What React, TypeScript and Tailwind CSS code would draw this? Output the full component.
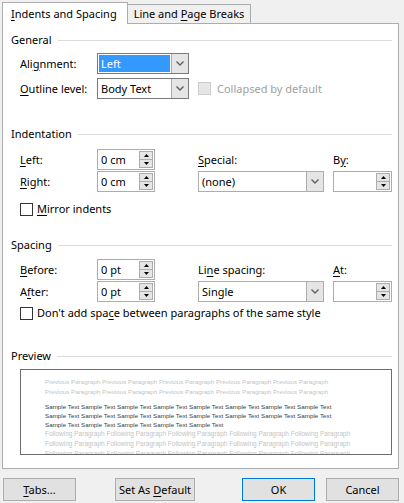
import type { ReactNode } from "react";

const Key = ({ children }: { children: ReactNode }) => (
  <span className="underline decoration-1 underline-offset-[2px]">{children}</span>
);

const Chevron = () => (
  <svg width="8" height="5" viewBox="0 0 8 5">
    <polyline points="0.5,0.5 4,4 7.5,0.5" fill="none" stroke="#606060" strokeWidth="1.4" />
  </svg>
);

const SectionHeader = ({ title }: { title: string }) => (
  <div className="flex h-[16px] items-center gap-[6px]">
    <span>{title}</span>
    <div className="h-px flex-1 bg-[#dcdcdc]" />
  </div>
);

const SelectBox = ({
  value,
  width,
  selected = false,
  light = false,
}: {
  value: string;
  width: string;
  selected?: boolean;
  light?: boolean;
}) => (
  <div
    className={`flex h-[21px] border bg-white ${width} ${
      light ? "border-[#adadad]" : "border-[#7a7a7a]"
    }`}
  >
    <div className="flex flex-1 p-[1px]">
      <div
        className={`flex flex-1 items-center pl-[2px] ${
          selected ? "bg-[#3399ff] text-white" : ""
        }`}
      >
        {value}
      </div>
    </div>
    <div className="flex w-[17px] items-center justify-center border-l border-[#adadad] bg-[#e5e5e5]">
      <Chevron />
    </div>
  </div>
);

const SpinBox = ({ value, width }: { value?: string; width: string }) => (
  <div className={`flex h-[21px] border border-[#adadad] bg-white ${width}`}>
    <div className="flex flex-1 items-center pl-[3px]">{value}</div>
    <div className="my-[1px] mr-[1px] flex w-[14px] flex-col border border-[#adadad] bg-[#e5e5e5]">
      <div className="flex flex-1 items-center justify-center border-b border-[#adadad]">
        <svg width="5" height="3" viewBox="0 0 5 3">
          <polygon points="2.5,0 5,3 0,3" fill="#000" />
        </svg>
      </div>
      <div className="flex flex-1 items-center justify-center">
        <svg width="5" height="3" viewBox="0 0 5 3">
          <polygon points="0,0 5,0 2.5,3" fill="#000" />
        </svg>
      </div>
    </div>
  </div>
);

const CheckBox = ({ disabled = false }: { disabled?: boolean }) => (
  <div
    className={`h-[13px] w-[13px] border ${
      disabled ? "border-[#cccccc] bg-[#e6e6e6]" : "border-[#333333] bg-white"
    }`}
  />
);

const Button = ({
  children,
  width,
  primary = false,
  className = "",
}: {
  children: ReactNode;
  width: string;
  primary?: boolean;
  className?: string;
}) => (
  <div
    className={`flex h-[23px] items-center justify-center whitespace-nowrap border bg-[#e1e1e1] ${width} ${
      primary ? "border-[#0078d7]" : "border-[#adadad]"
    } ${className}`}
  >
    {children}
  </div>
);

const prevLine = Array(5).fill("Previous Paragraph").join(" ");
const followLine = Array(5).fill("Following Paragraph").join(" ");
const sampleLine = Array(8).fill("Sample Text").join(" ");
const sampleShort = Array(5).fill("Sample Text").join(" ");

const Preview = () => (
  <div className="ml-[9px] h-[86px] w-[372px] overflow-hidden border border-[#6d6d6d] bg-white pl-[24px] pt-[7px] font-['Liberation_Sans',sans-serif] text-[6.25px] whitespace-nowrap">
    <div className="leading-[10px] text-[#c4c4c4]">
      <div>{prevLine}</div>
      <div>{prevLine}</div>
    </div>
    <div className="mt-[5px] leading-[9px] text-[#3c3c3c]">
      <div>{sampleLine}</div>
      <div>{sampleLine}</div>
      <div>{sampleShort}</div>
    </div>
    <div className="text-[6.5px] leading-[10px] text-[#c4c4c4]">
      <div>{followLine}</div>
      <div>{followLine}</div>
      <div>{followLine}</div>
    </div>
  </div>
);

export default function App() {
  return (
    <div className="h-[503px] w-[404px] overflow-hidden bg-[#f0f0f0] font-['Noto_Sans',sans-serif] text-[11px] leading-[16px] text-black">
      <div className="flex h-[23px] items-end pl-[2px]">
        <div className="relative z-10 -mb-px flex h-[22px] w-[126px] items-center whitespace-nowrap border border-b-0 border-[#adadad] bg-white pl-[8px]">
          <span>
            <Key>I</Key>ndents and Spacing
          </span>
        </div>
        <div className="flex h-[19px] w-[123px] items-center justify-center whitespace-nowrap border border-b-0 border-l-0 border-[#adadad] bg-[#f0f0f0]">
          <span>
            Line and <Key>P</Key>age Breaks
          </span>
        </div>
      </div>

      <div className="ml-[2px] h-[446px] w-[397px] border border-[#adadad] bg-white pl-[8px] pr-[6px]">
        <div className="mt-[8px]">
          <SectionHeader title="General" />
        </div>
        <div className="mt-[5px] flex h-[21px] items-center pl-[9px]">
          <div className="w-[77px]">
            Ali<Key>g</Key>nment:
          </div>
          <SelectBox value="Left" width="w-[92px]" selected />
        </div>
        <div className="mt-[4px] flex h-[21px] items-center pl-[9px]">
          <div className="w-[77px]">
            <Key>O</Key>utline level:
          </div>
          <SelectBox value="Body Text" width="w-[92px]" />
          <div className="ml-[9px]">
            <CheckBox disabled />
          </div>
          <div className="ml-[6px] text-[#a0a0a0]">Collapsed by default</div>
        </div>

        <div className="mt-[27px]">
          <SectionHeader title="Indentation" />
        </div>
        <div className="mt-[7px] flex h-[21px] items-center pl-[9px]">
          <div className="w-[77px]">
            <Key>L</Key>eft:
          </div>
          <SpinBox value="0 cm" width="w-[58px]" />
          <div className="ml-[43px] w-[135px]">
            <Key>S</Key>pecial:
          </div>
          <div>
            B<Key>y</Key>:
          </div>
        </div>
        <div className="mt-[1px] flex h-[21px] items-center pl-[9px]">
          <div className="w-[77px]">
            <Key>R</Key>ight:
          </div>
          <SpinBox value="0 cm" width="w-[58px]" />
          <div className="ml-[43px]">
            <SelectBox value="(none)" width="w-[126px]" light />
          </div>
          <div className="ml-[9px]">
            <SpinBox width="w-[59px]" />
          </div>
        </div>
        <div className="mt-[9px] flex h-[16px] items-center gap-[4px] pl-[9px]">
          <CheckBox />
          <span>
            <Key>M</Key>irror indents
          </span>
        </div>

        <div className="mt-[20px]">
          <SectionHeader title="Spacing" />
        </div>
        <div className="mt-[6px] flex h-[21px] items-center pl-[9px]">
          <div className="w-[77px]">
            <Key>B</Key>efore:
          </div>
          <SpinBox value="0 pt" width="w-[58px]" />
          <div className="ml-[43px] w-[135px]">
            Li<Key>n</Key>e spacing:
          </div>
          <div>
            <Key>A</Key>t:
          </div>
        </div>
        <div className="mt-[1px] flex h-[21px] items-center pl-[9px]">
          <div className="w-[77px]">
            A<Key>f</Key>ter:
          </div>
          <SpinBox value="0 pt" width="w-[58px]" />
          <div className="ml-[43px]">
            <SelectBox value="Single" width="w-[126px]" light />
          </div>
          <div className="ml-[9px]">
            <SpinBox width="w-[59px]" />
          </div>
        </div>
        <div className="mt-[3px] flex h-[16px] items-center gap-[4px] pl-[9px]">
          <CheckBox />
          <span>
            Don't add spa<Key>c</Key>e between paragraphs of the same style
          </span>
        </div>

        <div className="mt-[27px]">
          <SectionHeader title="Preview" />
        </div>
        <div className="mt-[5px]">
          <Preview />
        </div>
      </div>

      <div className="mt-[9px] flex pl-[3px]">
        <Button width="w-[73px]">
          <span>
            <Key>T</Key>abs...
          </span>
        </Button>
        <Button width="w-[80px]" className="ml-[39px]">
          <span>
            Set As <Key>D</Key>efault
          </span>
        </Button>
        <Button width="w-[73px]" className="ml-[47px]" primary>
          OK
        </Button>
        <Button width="w-[73px]" className="ml-[11px]">
          Cancel
        </Button>
      </div>
    </div>
  );
}
